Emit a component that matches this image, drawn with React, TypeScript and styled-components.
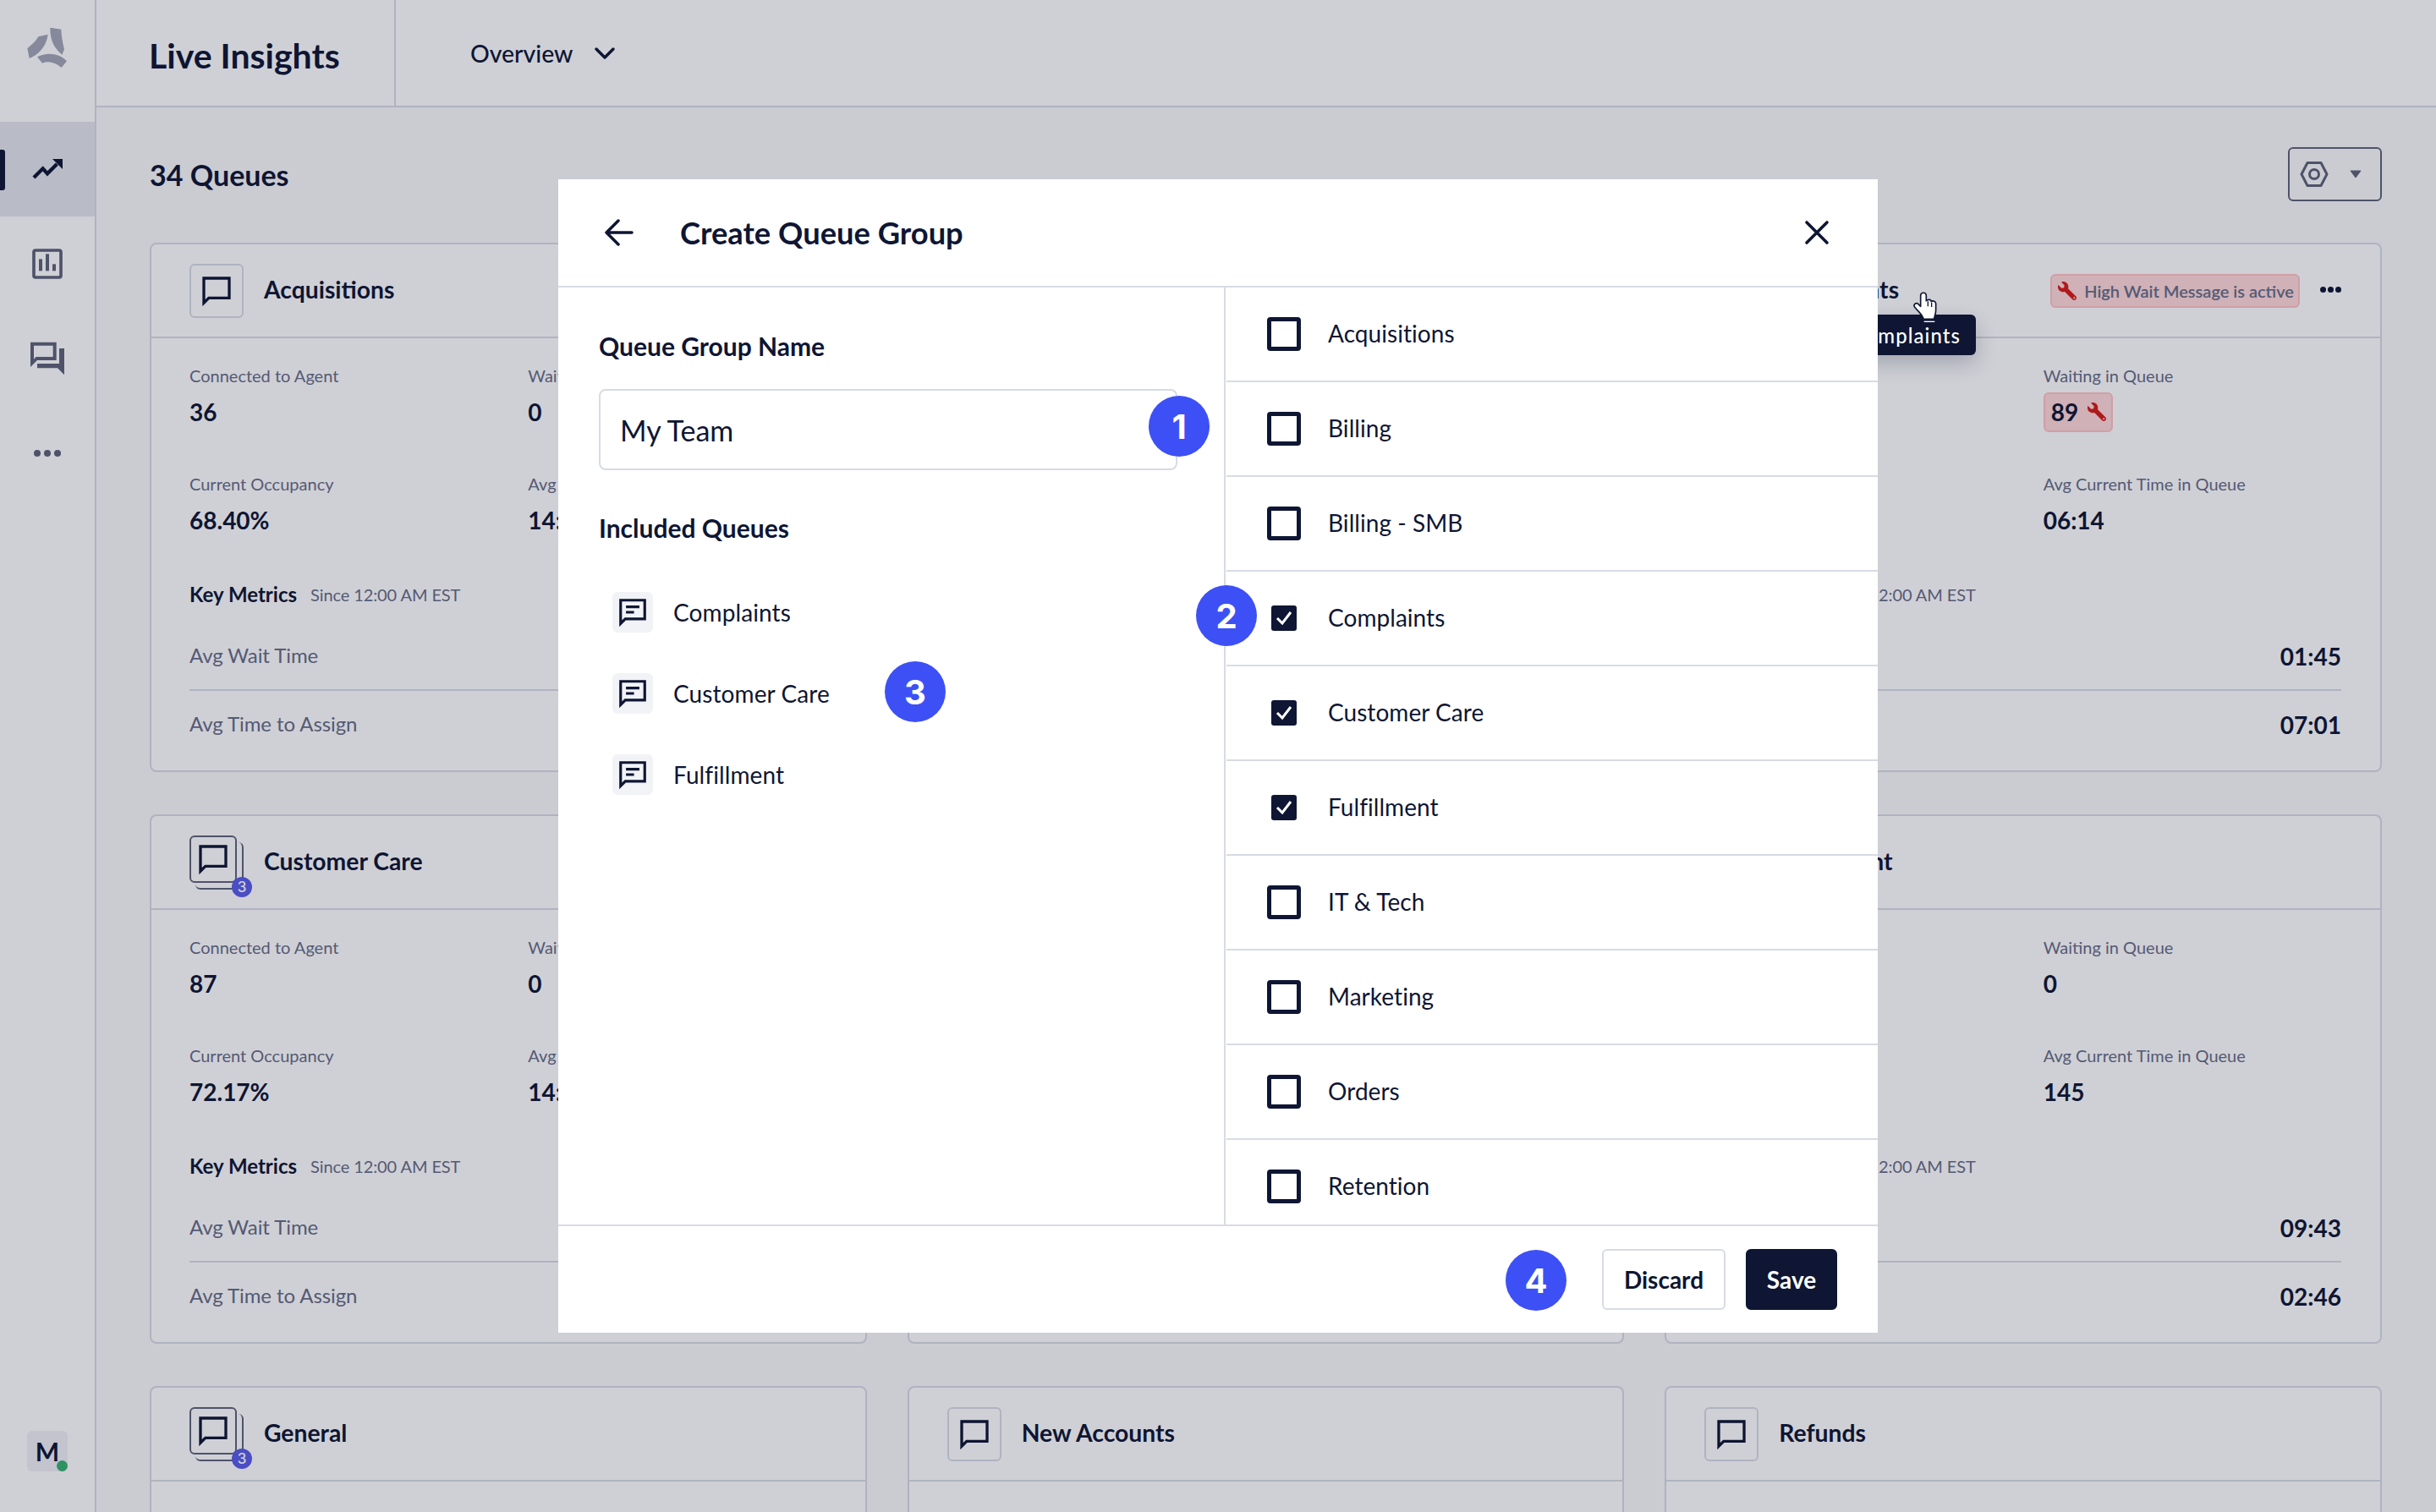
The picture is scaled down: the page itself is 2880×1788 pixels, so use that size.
import React from "react";
import styled, { createGlobalStyle } from "styled-components";
import { FaWrench } from "react-icons/fa";

const navy = "#0E1633";
const grey = "#676C85";
const line = "#D8DBE4";
const font = `Lato, "Liberation Sans", sans-serif`;

const Global = createGlobalStyle`
  html, body { margin: 0; padding: 0; width: 2880px; height: 1788px; overflow: hidden; background: #FAFAFB; }
  #root { width: 2880px; height: 1788px; }
  * { box-sizing: border-box; }
`;

const Page = styled.div`
  position: relative;
  display: flex;
  width: 2880px;
  height: 1788px;
  overflow: hidden;
  font-family: ${font};
  color: ${navy};
  background: #FAFAFB;
`;

const Sidebar = styled.aside`
  width: 114px;
  flex: none;
  display: flex;
  flex-direction: column;
  background: #FFFFFF;
  border-right: 2px solid ${line};
`;

const LogoSlot = styled.div`
  height: 144px;
  flex: none;
  display: flex;
  justify-content: center;
  padding-top: 20px;
`;

const NavItem = styled.div<{ $active?: boolean }>`
  position: relative;
  height: 112px;
  flex: none;
  display: flex;
  align-items: center;
  justify-content: center;
  background: ${(p) => (p.$active ? "#E4E7ED" : "transparent")};
  &::before {
    content: "";
    display: ${(p) => (p.$active ? "block" : "none")};
    position: absolute;
    left: 0;
    top: 33px;
    width: 6px;
    height: 48px;
    border-radius: 0 3px 3px 0;
    background: ${navy};
  }
`;

const SideSpacer = styled.div`
  flex: 1;
`;

const Avatar = styled.div`
  position: relative;
  width: 48px;
  height: 48px;
  margin: 0 0 48px 32px;
  border-radius: 6px;
  background: #F0F1F5;
  display: flex;
  align-items: center;
  justify-content: center;
  font-size: 30px;
  font-weight: 700;
  &::after {
    content: "";
    position: absolute;
    right: 0;
    bottom: 0;
    width: 13px;
    height: 13px;
    border-radius: 50%;
    background: #38B26F;
  }
`;

const Main = styled.main`
  flex: 1;
  min-width: 0;
  display: flex;
  flex-direction: column;
`;

const TopBar = styled.header`
  height: 127px;
  flex: none;
  display: flex;
  align-items: stretch;
  background: #FFFFFF;
  border-bottom: 2px solid ${line};
`;

const AppTitle = styled.h1`
  width: 354px;
  margin: 0;
  padding: 5px 0 0 62px;
  display: flex;
  align-items: center;
  font-size: 41px;
  font-weight: 700;
  border-right: 2px solid ${line};
`;

const ViewPicker = styled.div`
  display: flex;
  align-items: center;
  gap: 25px;
  padding-left: 88px;
  font-size: 28.4px;
  font-weight: 500;
`;

const Content = styled.div`
  padding: 47px 64px 0 63px;
`;

const ContentHead = styled.div`
  height: 64px;
  display: flex;
  align-items: center;
  justify-content: space-between;
  margin-bottom: 49px;
`;

const QueueCount = styled.h2`
  margin: 0;
  font-size: 34px;
  font-weight: 700;
`;

const SettingsButton = styled.div`
  width: 111px;
  height: 64px;
  display: flex;
  align-items: center;
  gap: 25px;
  padding-left: 12px;
  border: 2.5px solid #5E6379;
  border-radius: 6px;
`;

const CardGrid = styled.div`
  display: grid;
  grid-template-columns: repeat(3, 1fr);
  gap: 50px 48px;
`;

const Card = styled.section`
  position: relative;
  height: 626px;
  background: #FFFFFF;
  border: 2px solid ${line};
  border-radius: 8px;
`;

const CardHead = styled.div`
  height: 111px;
  display: flex;
  align-items: center;
  padding: 0 46px 0 45px;
  gap: 24px;
  border-bottom: 2px solid ${line};
`;

const IconBox = styled.div`
  width: 64px;
  height: 64px;
  flex: none;
  display: flex;
  align-items: center;
  justify-content: center;
  border: 2px solid ${line};
  border-radius: 6px;
`;

const StackBox = styled.div`
  position: relative;
  width: 64px;
  height: 64px;
  flex: none;
  &::after {
    content: "";
    position: absolute;
    right: 0;
    bottom: 0;
    width: 55px;
    height: 54px;
    border-right: 2px solid #5E6379;
    border-bottom: 2px solid #5E6379;
    border-radius: 0 6px 6px 6px;
  }
`;

const StackFront = styled.div`
  position: relative;
  z-index: 1;
  width: 56px;
  height: 56px;
  display: flex;
  align-items: center;
  justify-content: center;
  background: #FFFFFF;
  border: 2px solid #5E6379;
  border-radius: 6px;
`;

const StackCount = styled.span`
  position: absolute;
  z-index: 2;
  left: 50px;
  top: 49px;
  width: 24px;
  height: 24px;
  border-radius: 50%;
  background: #595CE8;
  color: #FFFFFF;
  font-family: Inter, sans-serif;
  font-size: 17px;
  font-weight: 500;
  display: flex;
  align-items: center;
  justify-content: center;
`;

const CardTitle = styled.h3`
  margin: -3px 0 0;
  flex: 1;
  font-size: 28.3px;
  font-weight: 700;
  white-space: nowrap;
`;

const AlertTag = styled.div`
  display: flex;
  align-items: center;
  gap: 9px;
  height: 40px;
  padding: 0 5px 0 7px;
  border: 2px solid #FFC2C2;
  border-radius: 6px;
  background: #FFD9D9;
  color: ${grey};
  font-size: 20px;
  font-weight: 600;
  white-space: nowrap;
`;

const RedWrench = styled(FaWrench)`
  color: #D81B14;
  transform: scaleX(-1);
  flex: none;
`;

const MoreDots = styled.div`
  display: flex;
  gap: 2px;
  margin-top: -2px;
  span {
    width: 7px;
    height: 7px;
    border-radius: 50%;
    background: ${navy};
  }
`;

const CardBody = styled.div`
  padding: 30px 46px 0 45px;
`;

const MetricGrid = styled.div`
  display: grid;
  grid-template-columns: 1fr 1fr;
  column-gap: 48px;
  row-gap: 44px;
`;

const Metric = styled.div`
  display: flex;
  flex-direction: column;
  align-items: flex-start;
`;

const MetricLabel = styled.div`
  height: 28px;
  line-height: 28px;
  font-size: 20px;
  color: ${grey};
  white-space: nowrap;
`;

const MetricValue = styled.div`
  height: 56px;
  padding-top: 2px;
  display: flex;
  align-items: center;
  font-size: 28px;
  font-weight: 700;
`;

const ValueAlert = styled.div`
  height: 47px;
  padding: 0 6px 0 7px;
  display: flex;
  align-items: center;
  gap: 11px;
  background: #FFD9D9;
  border: 2px solid #FFC2C2;
  border-radius: 6px;
`;

const KeyHead = styled.div`
  height: 30px;
  margin: 45px 0 16px;
  display: flex;
  align-items: center;
  gap: 16px;
`;

const KeyTitle = styled.span`
  font-size: 24px;
  font-weight: 700;
`;

const KeyNote = styled.span`
  font-size: 20px;
  letter-spacing: -0.1px;
  color: ${grey};
  margin-top: 2px;
`;

const RateRow = styled.div`
  height: 82px;
  display: flex;
  align-items: center;
  justify-content: space-between;
  font-size: 24px;
  letter-spacing: -0.08px;
  color: ${grey};
  & + & {
    height: 78px;
    border-top: 2px solid ${line};
  }
`;

const RateValue = styled.span`
  margin-top: 3px;
  font-size: 28px;
  font-weight: 700;
  letter-spacing: 0;
  color: ${navy};
`;

const Tooltip = styled.div`
  position: absolute;
  z-index: 11;
  right: 478px;
  top: 83px;
  height: 48px;
  padding: 0 18px;
  display: flex;
  align-items: center;
  background: ${navy};
  color: #FFFFFF;
  border-radius: 6px;
  font-size: 24px;
  font-weight: 500;
  letter-spacing: 1.05px;
  box-shadow: 0 10px 24px rgba(14, 22, 51, 0.22);
`;

const HandCursor = styled.svg`
  position: absolute;
  z-index: 12;
  left: 2250px;
  top: 335px;
  width: 60px;
  height: 60px;
`;

const Scrim = styled.div`
  position: absolute;
  inset: 0;
  z-index: 10;
  background: rgba(14, 22, 51, 0.2);
`;

const Modal = styled.div`
  position: absolute;
  z-index: 13;
  left: 660px;
  top: 212px;
  width: 1560px;
  height: 1364px;
  display: flex;
  flex-direction: column;
  background: #FFFFFF;
`;

const ModalHead = styled.div`
  height: 128px;
  flex: none;
  display: flex;
  align-items: center;
  padding: 0 57px 0 55px;
  border-bottom: 2px solid ${line};
`;

const ModalTitle = styled.h2`
  flex: 1;
  margin: 0 0 0 55px;
  font-size: 36.3px;
  font-weight: 700;
`;

const ModalBody = styled.div`
  flex: 1;
  min-height: 0;
  display: flex;
`;

const LeftPane = styled.div`
  width: 789px;
  flex: none;
  padding: 49px 0 0 48px;
  border-right: 2px solid ${line};
`;

const FieldLabel = styled.div`
  height: 40px;
  line-height: 40px;
  font-size: 30px;
  font-weight: 700;
`;

const NameInput = styled.input`
  display: block;
  width: 684px;
  height: 96px;
  margin-top: 31px;
  padding: 0 23px;
  border: 2px solid ${line};
  border-radius: 8px;
  outline: none;
  background: #FFFFFF;
  color: ${navy};
  font-family: ${font};
  font-size: 34px;
`;

const IncludedLabel = styled(FieldLabel)`
  margin-top: 48px;
`;

const IncludedList = styled.div`
  display: flex;
  flex-direction: column;
  gap: 48px;
  margin-top: 56px;
  padding-left: 16px;
`;

const IncludedItem = styled.div`
  display: flex;
  align-items: center;
  gap: 24px;
  font-size: 28px;
  letter-spacing: 0.1px;
`;

const ItemIcon = styled.div`
  width: 48px;
  height: 48px;
  display: flex;
  align-items: center;
  justify-content: center;
  background: #F2F3F6;
  border-radius: 6px;
`;

const RightPane = styled.div`
  flex: 1;
  min-width: 0;
  overflow: hidden;
`;

const QueueRow = styled.div`
  height: 112px;
  display: flex;
  align-items: center;
  padding-left: 48px;
  margin-left: 1px;
  border-bottom: 2.5px solid ${line};
  font-size: 28px;
  letter-spacing: 0.05px;
`;

const QueueName = styled.span`
  margin-top: -3px;
`;

const CheckSlot = styled.div`
  width: 40px;
  height: 40px;
  margin-right: 32px;
  display: flex;
  align-items: center;
  justify-content: center;
`;

const EmptyCheck = styled.div`
  width: 40px;
  height: 40px;
  border: 5px solid ${navy};
  border-radius: 4px;
`;

const FilledCheck = styled.div`
  width: 30px;
  height: 30px;
  background: ${navy};
  border-radius: 3px;
  display: flex;
  align-items: center;
  justify-content: center;
`;

const ModalFoot = styled.div`
  height: 128px;
  flex: none;
  display: flex;
  align-items: center;
  justify-content: flex-end;
  gap: 24px;
  padding-right: 48px;
  border-top: 2px solid ${line};
`;

const Button = styled.div<{ $primary?: boolean }>`
  width: ${(p) => (p.$primary ? 108 : 146)}px;
  height: 72px;
  display: flex;
  align-items: center;
  justify-content: center;
  border-radius: 6px;
  font-size: 28px;
  font-weight: 700;
  background: ${(p) => (p.$primary ? navy : "#FFFFFF")};
  color: ${(p) => (p.$primary ? "#FFFFFF" : navy)};
  border: 2px solid ${(p) => (p.$primary ? navy : line)};
`;

const Marker = styled.div<{ $x: number; $y: number }>`
  position: absolute;
  left: ${(p) => p.$x}px;
  top: ${(p) => p.$y}px;
  width: 72px;
  height: 72px;
  border-radius: 50%;
  background: #3D50F5;
  color: #FFFFFF;
  font-family: Inter, sans-serif;
  font-size: 40px;
  font-weight: 700;
  display: flex;
  align-items: center;
  justify-content: center;
`;

const Logo = () => (
  <svg width="70" height="70" viewBox="3 0 210 210" fill="#A4A7B6">
    <path d="M118 38L157 44C158 75 165 100 168 115L160 134C140 115 118 95 118 38Z" />
    <path d="M110 62L76 70C65 90 50 100 37 112L44 147C75 135 105 105 110 62Z" />
    <path d="M72 142C105 125 150 128 177 157L158 180C135 160 110 155 90 164Z" />
  </svg>
);

const TrendIcon = () => (
  <svg width="70" height="70" viewBox="3 -15 210 210">
    <path d="M60 120L92 88L108 106L142 72" fill="none" stroke={navy} strokeWidth="13" />
    <path d="M126 54H162V90Z" fill={navy} />
  </svg>
);

const ChartIcon = () => (
  <svg width="70" height="70" viewBox="3 0 210 210" fill="#5E6379">
    <rect x="60" y="57" width="96" height="96" rx="6" fill="none" stroke="#5E6379" strokeWidth="11" />
    <rect x="78" y="88" width="12" height="42" />
    <rect x="102" y="70" width="12" height="60" />
    <rect x="126" y="106" width="12" height="24" />
  </svg>
);

const ForumIcon = () => (
  <svg width="70" height="70" viewBox="3 26 210 210" fill="#5E6379">
    <path fillRule="evenodd" d="M48 73H140V137H72L48 161ZM60 85V133L68 125H128V85Z" />
    <path d="M150 95H168V189L144 165H72V149H150Z" />
  </svg>
);

const DotsIcon = () => (
  <svg width="34" height="10" viewBox="0 0 34 10" fill="#5E6379">
    <circle cx="5" cy="5" r="4" />
    <circle cx="17" cy="5" r="4" />
    <circle cx="29" cy="5" r="4" />
  </svg>
);

const BubbleIcon = () => (
  <svg width="40" height="40" viewBox="0 0 24 24" fill="none" stroke={navy} strokeWidth="2">
    <path d="M3 3H21V17H6.5L3 20.5Z" />
  </svg>
);

const TextBubbleIcon = () => (
  <svg width="38" height="38" viewBox="0 0 24 24" fill="none" stroke={navy} strokeWidth="2">
    <path d="M3 3H21V17H6.5L3 20.5Z" />
    <path d="M7 8H17M7 12H13" />
  </svg>
);

const Chevron = () => (
  <svg width="26" height="26" viewBox="0 0 26 26" fill="none" stroke={navy} strokeWidth="3.5" strokeLinecap="round" strokeLinejoin="round">
    <path d="M3 8L13 18L23 8" />
  </svg>
);

const HexIcon = () => (
  <svg width="34" height="32" viewBox="0 0 34 32" fill="none" stroke="#5E6379" strokeWidth="3">
    <path d="M9 2.5H25L32 16L25 29.5H9L2 16Z" strokeLinejoin="round" />
    <circle cx="17" cy="16" r="5.5" />
  </svg>
);

const Caret = () => (
  <svg width="14" height="10" viewBox="0 0 14 10" fill="#5E6379">
    <path d="M1 1H13L7 9Z" stroke="#5E6379" strokeWidth="1" strokeLinejoin="round" />
  </svg>
);

const BackArrow = () => (
  <svg width="34" height="32" viewBox="0 0 34 32" fill="none" stroke={navy} strokeWidth="3.5" strokeLinecap="round" strokeLinejoin="round">
    <path d="M32 16H3M16 2L2 16L16 30" />
  </svg>
);

const CloseIcon = () => (
  <svg width="30" height="30" viewBox="0 0 30 30" fill="none" stroke={navy} strokeWidth="3.6" strokeLinecap="round">
    <path d="M3 3L27 27M27 3L3 27" />
  </svg>
);

const CheckMark = () => (
  <svg width="22" height="22" viewBox="0 0 22 22" fill="none" stroke="#FFFFFF" strokeWidth="3">
    <path d="M3 11L9 17L19 4" />
  </svg>
);

type Data = {
  id: string;
  name?: string;
  stacked?: boolean;
  connected?: string;
  occupancy?: string;
  wait?: string;
  waitAlert?: boolean;
  current?: string;
  rateA?: string;
  rateB?: string;
  tag?: boolean;
  tooltip?: boolean;
  headOnly?: boolean;
};

const cards: Data[] = [
  { id: "a", name: "Acquisitions", connected: "36", wait: "0", occupancy: "68.40%", current: "14:21" },
  { id: "b", headOnly: true },
  { id: "c", name: "Complaints", wait: "89", waitAlert: true, current: "06:14", rateA: "01:45", rateB: "07:01", tag: true, tooltip: true },
  { id: "d", name: "Customer Care", stacked: true, connected: "87", wait: "0", occupancy: "72.17%", current: "14:50" },
  { id: "e", headOnly: true },
  { id: "f", name: "Fulfillment", wait: "0", current: "145", rateA: "09:43", rateB: "02:46" },
  { id: "g", name: "General", stacked: true, headOnly: true },
  { id: "h", name: "New Accounts", headOnly: true },
  { id: "i", name: "Refunds", headOnly: true },
];

const queues = [
  { name: "Acquisitions" },
  { name: "Billing" },
  { name: "Billing - SMB" },
  { name: "Complaints", on: true },
  { name: "Customer Care", on: true },
  { name: "Fulfillment", on: true },
  { name: "IT & Tech" },
  { name: "Marketing" },
  { name: "Orders" },
  { name: "Retention" },
];

const QueueCard = ({ d }: { d: Data }) => (
  <Card>
    {d.name && (
      <CardHead>
        {d.stacked ? (
          <StackBox>
            <StackFront>
              <BubbleIcon />
            </StackFront>
            <StackCount>3</StackCount>
          </StackBox>
        ) : (
          <IconBox>
            <BubbleIcon />
          </IconBox>
        )}
        <CardTitle>{d.name}</CardTitle>
        {d.tag && (
          <AlertTag>
            <RedWrench size={22} />
            High Wait Message is active
          </AlertTag>
        )}
        {d.tag && (
          <MoreDots>
            <span />
            <span />
            <span />
          </MoreDots>
        )}
      </CardHead>
    )}
    {d.tooltip && <Tooltip>Complaints</Tooltip>}
    {!d.headOnly && (
      <CardBody>
        <MetricGrid>
          <Metric>
            <MetricLabel>Connected to Agent</MetricLabel>
            <MetricValue>{d.connected}</MetricValue>
          </Metric>
          <Metric>
            <MetricLabel>Waiting in Queue</MetricLabel>
            <MetricValue>
              {d.waitAlert ? (
                <ValueAlert>
                  {d.wait}
                  <RedWrench size={22} />
                </ValueAlert>
              ) : (
                d.wait
              )}
            </MetricValue>
          </Metric>
          <Metric>
            <MetricLabel>Current Occupancy</MetricLabel>
            <MetricValue>{d.occupancy}</MetricValue>
          </Metric>
          <Metric>
            <MetricLabel>Avg Current Time in Queue</MetricLabel>
            <MetricValue>{d.current}</MetricValue>
          </Metric>
        </MetricGrid>
        <KeyHead>
          <KeyTitle>Key Metrics</KeyTitle>
          <KeyNote>Since 12:00 AM EST</KeyNote>
        </KeyHead>
        <RateRow>
          Avg Wait Time
          <RateValue>{d.rateA}</RateValue>
        </RateRow>
        <RateRow>
          Avg Time to Assign
          <RateValue>{d.rateB}</RateValue>
        </RateRow>
      </CardBody>
    )}
  </Card>
);

export default function App() {
  return (
    <Page>
      <Global />
      <Sidebar>
        <LogoSlot>
          <Logo />
        </LogoSlot>
        <NavItem $active>
          <TrendIcon />
        </NavItem>
        <NavItem>
          <ChartIcon />
        </NavItem>
        <NavItem>
          <ForumIcon />
        </NavItem>
        <NavItem>
          <DotsIcon />
        </NavItem>
        <SideSpacer />
        <Avatar>M</Avatar>
      </Sidebar>
      <Main>
        <TopBar>
          <AppTitle>Live Insights</AppTitle>
          <ViewPicker>
            Overview
            <Chevron />
          </ViewPicker>
        </TopBar>
        <Content>
          <ContentHead>
            <QueueCount>34 Queues</QueueCount>
            <SettingsButton>
              <HexIcon />
              <Caret />
            </SettingsButton>
          </ContentHead>
          <CardGrid>
            {cards.map((d) => (
              <QueueCard key={d.id} d={d} />
            ))}
          </CardGrid>
        </Content>
      </Main>
      <Scrim />
      <HandCursor viewBox="0 0 180 180">
        <path
          d="M62 45C62 30 82 30 82 45V62C90 55 100 58 100 65C106 60 116 65 116 72V95C116 110 110 118 110 127H72C70 115 60 105 50 95L40 83C36 75 45 68 52 72L62 82Z"
          fill="#FFFFFF"
          stroke={navy}
          strokeWidth="5"
          strokeLinejoin="round"
        />
        <path d="M88 64V82M101 68V84" fill="none" stroke={navy} strokeWidth="4" />
        <path d="M74 136H112" fill="none" stroke="#FFFFFF" strokeWidth="4" />
      </HandCursor>
      <Modal>
        <ModalHead>
          <BackArrow />
          <ModalTitle>Create Queue Group</ModalTitle>
          <CloseIcon />
        </ModalHead>
        <ModalBody>
          <LeftPane>
            <FieldLabel>Queue Group Name</FieldLabel>
            <NameInput defaultValue="My Team" />
            <IncludedLabel>Included Queues</IncludedLabel>
            <IncludedList>
              {queues
                .filter((q) => q.on)
                .map((q) => (
                  <IncludedItem key={q.name}>
                    <ItemIcon>
                      <TextBubbleIcon />
                    </ItemIcon>
                    {q.name}
                  </IncludedItem>
                ))}
            </IncludedList>
          </LeftPane>
          <RightPane>
            {queues.map((q) => (
              <QueueRow key={q.name}>
                <CheckSlot>
                  {q.on ? (
                    <FilledCheck>
                      <CheckMark />
                    </FilledCheck>
                  ) : (
                    <EmptyCheck />
                  )}
                </CheckSlot>
                <QueueName>{q.name}</QueueName>
              </QueueRow>
            ))}
          </RightPane>
        </ModalBody>
        <ModalFoot>
          <Button>Discard</Button>
          <Button $primary>Save</Button>
        </ModalFoot>
        <Marker $x={698} $y={256}>1</Marker>
        <Marker $x={754} $y={480}>2</Marker>
        <Marker $x={386} $y={570}>3</Marker>
        <Marker $x={1120} $y={1266}>4</Marker>
      </Modal>
    </Page>
  );
}
